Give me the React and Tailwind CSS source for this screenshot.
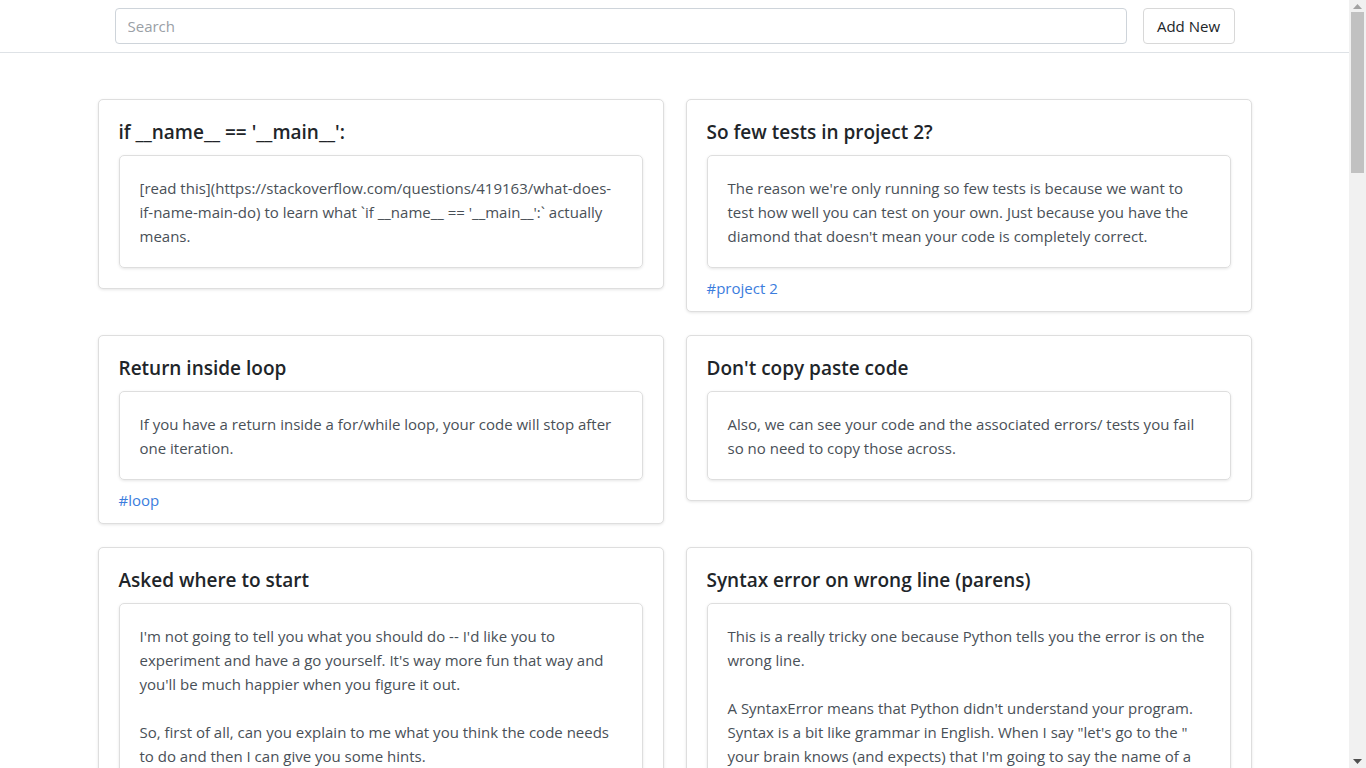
import React from 'react';

const notes = [
  {
    title: "if __name__ == '__main__':",
    body: [
      [
        '[read this](https://stackoverflow.com/questions/419163/what-does-',
        "if-name-main-do) to learn what `if __name__ == '__main__':` actually",
        'means.',
      ],
    ],
  },
  {
    title: 'So few tests in project 2?',
    body: [
      [
        "The reason we're only running so few tests is because we want to",
        'test how well you can test on your own. Just because you have the',
        "diamond that doesn't mean your code is completely correct.",
      ],
    ],
    tag: '#project 2',
  },
  {
    title: 'Return inside loop',
    body: [
      [
        'If you have a return inside a for/while loop, your code will stop after',
        'one iteration.',
      ],
    ],
    tag: '#loop',
  },
  {
    title: "Don't copy paste code",
    body: [
      [
        'Also, we can see your code and the associated errors/ tests you fail',
        'so no need to copy those across.',
      ],
    ],
  },
  {
    title: 'Asked where to start',
    body: [
      [
        "I'm not going to tell you what you should do -- I'd like you to",
        "experiment and have a go yourself. It's way more fun that way and",
        "you'll be much happier when you figure it out.",
      ],
      [
        'So, first of all, can you explain to me what you think the code needs',
        'to do and then I can give you some hints.',
      ],
    ],
  },
  {
    title: 'Syntax error on wrong line (parens)',
    body: [
      [
        'This is a really tricky one because Python tells you the error is on the',
        'wrong line.',
      ],
      [
        "A SyntaxError means that Python didn't understand your program.",
        'Syntax is a bit like grammar in English. When I say "let\'s go to the "',
        "your brain knows (and expects) that I'm going to say the name of a",
        'place next. Python does the same thing with brackets: when it sees an',
        'opening bracket it expects a closing one later on.',
      ],
    ],
  },
];

const NoteCard = ({ note }) => (
  <div className="bg-white border border-[#dedede] rounded-[5px] shadow-[0_1px_3px_rgba(0,0,0,0.10)] p-5">
    <h5 className="text-[19px] leading-6 font-semibold text-[#212529] mb-[11px]">{note.title}</h5>
    <div className="border border-[#dedede] rounded-[5px] shadow-[0_1px_3px_rgba(0,0,0,0.10)] px-5 pt-5 pb-[19px] text-[15px] leading-6 text-[#495057]">
      {note.body.map((para, i) => (
        <p key={i} className={i > 0 ? 'mt-6' : ''}>
          {para.map((line, j) => (
            <span key={j} className="block whitespace-nowrap">
              {line}
            </span>
          ))}
        </p>
      ))}
    </div>
    {note.tag && (
      <div className="mt-2 -mb-[9px] text-[15px] leading-6 text-[#3b7ddd]">{note.tag}</div>
    )}
  </div>
);

// classic window scrollbar drawn at the right edge
const Scrollbar = () => (
  <div className="w-[17px] h-full bg-[#f1f1f1] flex flex-col items-center shrink-0">
    <div className="h-[12px] w-full flex items-center justify-center">
      <svg width="9" height="5" viewBox="0 0 9 5">
        <path d="M0 5 L4.5 0 L9 5 Z" fill="#a3a3a3" />
      </svg>
    </div>
    <div className="w-[13px] h-[161px] bg-[#c1c1c1]" />
    <div className="flex-1" />
    <div className="h-[14px] w-full flex items-center justify-center">
      <svg width="9" height="5" viewBox="0 0 9 5">
        <path d="M0 0 L9 0 L4.5 5 Z" fill="#505050" />
      </svg>
    </div>
  </div>
);

export default function App() {
  return (
    <div className="h-screen flex bg-white font-['Open_Sans',sans-serif] overflow-hidden">
      <div className="flex-1 h-full overflow-y-auto [scrollbar-width:none]">
        {/* Top bar */}
        <div className="border-b border-[#dee2e6] h-[53px] flex items-center">
          <div className="w-[1120px] mx-auto flex items-center gap-4">
            <input
              type="text"
              placeholder="Search"
              className="flex-1 h-9 px-3 text-[15px] border border-[#ced4da] rounded-[4px] placeholder:text-[#9aa0a6] outline-none"
            />
            <button className="h-9 w-[92px] text-[15px] text-[#212529] border border-[#d8d8d8] rounded-[4px] bg-white">
              Add New
            </button>
          </div>
        </div>

        {/* Notes */}
        <div className="w-[1154px] mx-auto pt-[46px] pb-10 grid grid-cols-2 gap-x-[22px] gap-y-[23px] items-start">
          {notes.map((note, i) => (
            <NoteCard key={i} note={note} />
          ))}
        </div>
      </div>
      <Scrollbar />
    </div>
  );
}
